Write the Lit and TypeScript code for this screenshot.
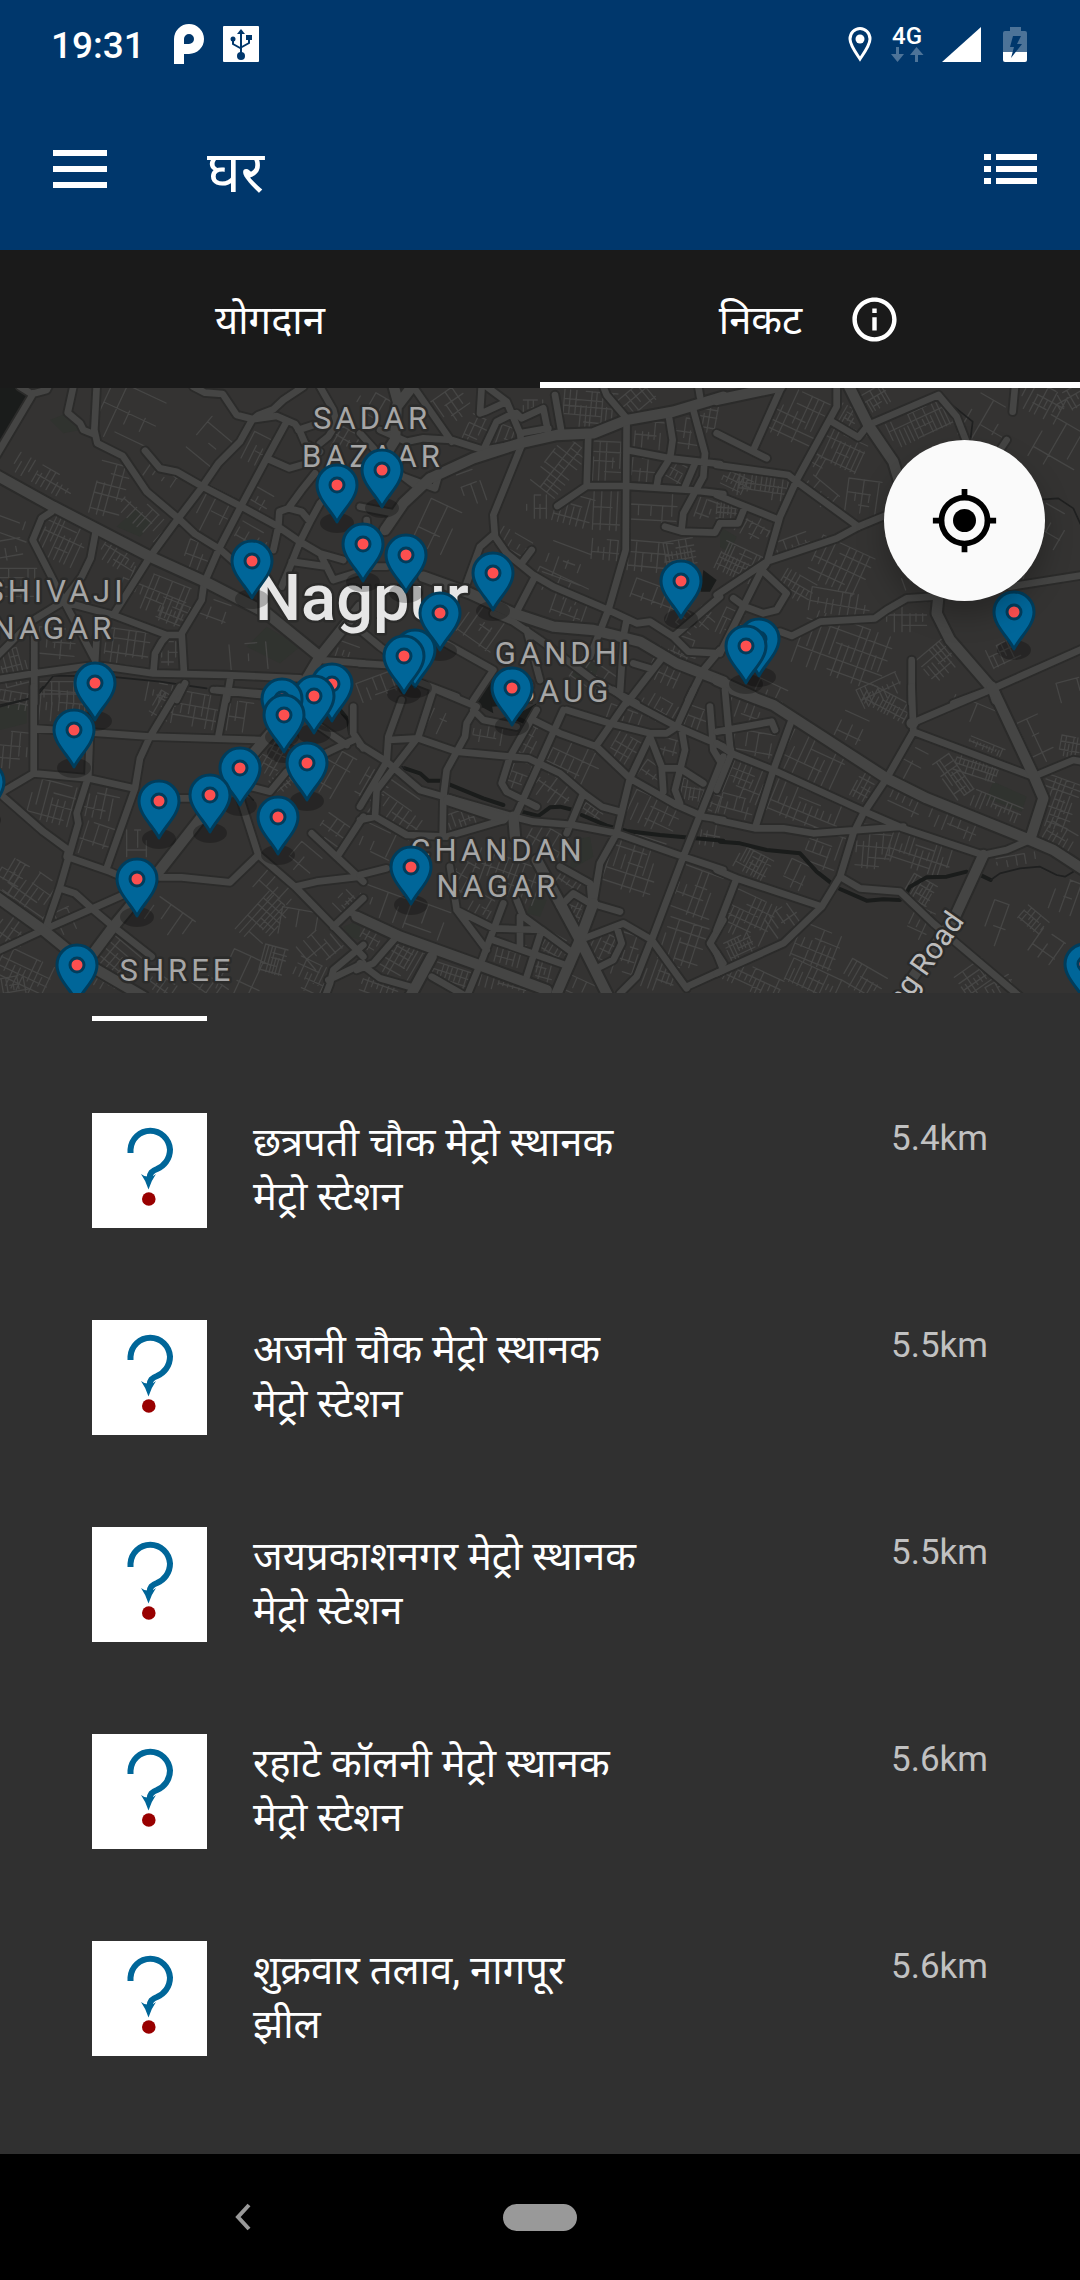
import { LitElement, html, svg, css } from "lit";
import { customElement, property } from "lit/decorators.js";

/** A street patch: centre x, centre y, width, height, rotation, spacing. */
type Patch = [number, number, number, number, number, number];

interface Tile {
  x: number;
  y: number;
  main: string;
  roads: string;
  river: string;
  track: string;
  water: string;
  park: string;
  patches: Patch[];
}

const TILES: Tile[] = [
  {
    x: 0,
    y: -8,
    main: "M-30 275L160 380L450 530L615 605L800 700L960 830M1080 680L960 830L900 930",
    roads:
      "M100 40L-10 225M60 20L95 42L140 30L150 10M220 20L203 98L240 130L250 150L280 162M290 20L283 150L292 190L368 228L440 335L535 415L585 462L660 508L730 570M580 20L615 38L668 42L710 105L760 118L830 108L885 132L900 155L915 190L960 215M910 20L850 60L820 88L775 105L755 122L720 185L655 250L600 330L535 415L450 530L340 705M860 125L800 235L725 375L660 500L612 610L605 660L545 760L552 880M435 212L480 265L530 275L605 318L725 380L835 440L900 485L960 520L1030 540M800 235L868 265L920 250M960 20L1000 90L1010 130L985 170L960 190M895 150L940 135M945 280L905 330L865 385L838 395L835 440L820 510M865 385L905 395L930 425M1000 330L960 370L930 425L900 485L870 560L845 620M875 545L980 560M965 530L1000 600L1080 575M160 380L155 395L125 415L98 480L190 660L285 840M288 450L272 535L245 590L185 668L100 720L-10 830M190 665L340 705L500 765L545 765M460 880L465 820L485 785L500 768M-20 900L105 880L285 855L460 880L680 885L900 895M103 760V970M640 930L780 945M690 900L680 960M555 910L530 960M960 840L1090 850M290 770L285 855",
    river: "",
    track: "M118 940L160 887L330 890L480 905L620 925M0 980L90 955",
    water: "M0 24H50L85 48L0 200Z",
    park: "M350 440L410 385L455 430L420 470ZM740 800L800 740L900 800L840 850ZM150 120L200 100L240 150L190 160Z",
    patches: [
      [385, 110, 170, 170, 25, 52], [640, 190, 120, 110, -50, 60], [130, 290, 190, 60, 30, 20], [330, 330, 90, 160, 15, 28],
      [430, 410, 160, 70, 42, 24], [190, 480, 130, 130, 25, 20], [360, 530, 120, 70, 32, 19], [50, 610, 120, 90, 0, 22],
      [460, 640, 200, 110, 22, 24], [520, 700, 90, 70, 22, 14], [640, 400, 90, 140, 27, 44], [775, 210, 70, 90, 27, 30],
      [780, 360, 60, 60, 30, 26], [600, 530, 90, 80, 20, 32], [45, 860, 80, 110, -15, 18], [170, 790, 110, 90, 5, 26],
      [380, 810, 130, 120, 8, 26], [510, 820, 50, 70, 0, 20], [200, 940, 170, 70, 0, 24], [480, 940, 80, 60, 12, 20],
      [40, 430, 80, 110, -70, 55], [1030, 180, 80, 70, 30, 22], [640, 690, 90, 60, 20, 44], [750, 830, 120, 80, -5, 66],
      [1040, 820, 60, 60, 20, 24], [480, 290, 90, 50, 35, 30], [20, 510, 90, 60, -10, 38], [760, 470, 100, 50, 30, 36],
    ],
  },
  {
    x: 360,
    y: -8,
    main: "M1090 50L940 95L800 120L700 160L590 165L480 190L340 235L210 295L130 370L75 450M160 15L110 80L105 180L60 250M190 590L330 640L460 700L580 740L700 750L840 785L950 850L1090 905M100 15L115 70",
    roads:
      "M160 20L275 185M60 150L140 185L190 175L275 180L370 210L480 190M210 290L235 290L225 325L130 290M365 20L360 100L375 95L440 65M380 20L440 65L480 160L485 195L400 405L405 470L440 520L520 585L580 620L745 690L830 730L870 725L940 770L985 815L1080 820M370 210L410 125L460 100M470 100L485 115L550 85L565 160M480 160L565 145M585 45L605 160M730 20L740 45L800 115L797 510L745 690L690 830M1015 20L1020 50M685 165L680 318L592 378M680 318L800 318L990 330L1090 342M925 100L938 180L930 235L895 290L890 320M1000 90L1035 220L1030 290L970 400L965 445M800 210L930 235L1080 252M1005 250L975 320M915 440L965 455L1065 458L1080 430M515 510L485 550M400 465L360 500L320 610M525 590L465 705M400 700L460 725L540 780L700 900L830 970M800 720L790 770M790 780L780 940M940 770L1080 650M905 835L800 970M1080 810L1030 870L985 960M0 750L60 800L130 850M0 850L80 855M240 780L400 870L340 960M820 850L870 865M160 900L290 950M20 420L30 560L80 560M0 160L90 260L170 320M0 380L100 400M500 750L540 900",
    river: "",
    track: "",
    water: "M1030 570L1070 600L1050 635L1022 635ZM390 900L520 970L340 985Z",
    park: "M640 840L720 850L700 900L640 890Z",
    patches: [
      [270, 80, 110, 90, -35, 26], [690, 90, 160, 110, 5, 17], [830, 60, 100, 70, -40, 22], [600, 260, 170, 90, -52, 20],
      [745, 245, 90, 120, 3, 22], [870, 165, 90, 80, 5, 24], [980, 160, 70, 90, 8, 26], [850, 275, 70, 80, 5, 24],
      [950, 285, 70, 70, 30, 18], [640, 390, 110, 90, 15, 22], [740, 390, 80, 120, 3, 28], [880, 390, 140, 110, 3, 36],
      [530, 380, 60, 70, 0, 22], [340, 320, 70, 100, -20, 34], [460, 490, 100, 60, 30, 28], [620, 550, 120, 100, 20, 36],
      [750, 510, 110, 60, 5, 24], [870, 530, 130, 90, 5, 26], [960, 520, 90, 80, -10, 14], [880, 660, 140, 90, 20, 32],
      [600, 620, 160, 60, 25, 40], [370, 740, 120, 110, 35, 34], [1010, 720, 90, 90, -50, 26], [1040, 110, 60, 90, 10, 20],
      [640, 690, 130, 60, 20, 30], [230, 440, 100, 140, 25, 52], [40, 80, 100, 80, 30, 50], [50, 920, 110, 60, -20, 30],
      [440, 170, 50, 60, 20, 22], [350, 150, 60, 80, 25, 22], [920, 860, 90, 100, 25, 26], [980, 800, 70, 50, 20, 18],
      [1040, 390, 60, 60, 20, 28], [700, 890, 120, 80, 35, 24], [520, 80, 60, 40, 0, 18],
    ],
  },
  {
    x: 720,
    y: -8,
    main: "M-10 60L180 20M385 15L445 135L520 245L545 330M655 650L650 700L690 780L820 930L830 960M-10 900L100 950",
    roads:
      "M185 20L100 210M-10 160L140 235M350 20L350 80L230 300L180 410L140 550L125 570L0 820M335 125L415 172L445 135L655 45L710 110L745 200M885 20L878 95M860 180L820 240M-10 255L205 285L230 305L415 440M-10 345L165 415M75 380L55 430L0 430M500 405L415 440L350 475L140 545L-10 645M125 570L200 640L170 690L130 700L75 680L40 655M180 755L215 768L300 725L465 715L500 690L560 655L640 650M870 620L1090 585M1090 805L820 925L700 970M575 840V970",
    river: "",
    track: "M690 70L758 125L750 190M970 358L1015 355L1060 385L1085 440",
    water: "",
    park: "M0 440L50 470L30 520L0 500Z",
    patches: [
      [230, 110, 150, 150, 25, 22], [380, 110, 60, 60, 30, 14], [370, 200, 130, 120, 25, 18], [460, 60, 90, 60, -30, 14],
      [600, 130, 190, 80, -25, 16], [130, 320, 150, 70, 8, 16], [50, 310, 90, 50, 25, 14], [20, 395, 60, 50, 5, 12],
      [110, 440, 110, 80, 28, 20], [300, 340, 100, 60, 40, 26], [430, 350, 100, 100, 8, 28], [60, 550, 130, 90, 25, 13],
      [220, 500, 100, 60, -20, 26], [360, 560, 170, 130, 25, 24], [230, 620, 100, 70, 30, 16], [360, 670, 180, 70, 10, 26],
      [560, 710, 120, 90, 0, 22], [370, 810, 270, 170, 20, 25], [480, 930, 130, 60, -25, 18], [660, 840, 110, 90, -40, 18],
      [850, 820, 90, 60, -25, 20], [960, 60, 150, 90, 28, 20], [800, 130, 120, 140, 30, 46], [1020, 200, 140, 140, 30, 66],
      [990, 440, 90, 110, 30, 44], [580, 590, 70, 60, -20, 26], [900, 560, 60, 70, 15, 26], [30, 730, 60, 80, 25, 18],
      [280, 250, 60, 60, 30, 20], [1050, 60, 80, 60, -30, 18], [150, 940, 90, 60, 25, 34], [1050, 930, 70, 60, -15, 60],
    ],
  },
  {
    x: 0,
    y: 302,
    main: "M-10 620L130 720L240 810L430 920M820 120L700 260L480 540L340 710L280 790",
    roads:
      "M101 -10V250M101 115L450 140L780 150M540 -10L450 140L420 205L405 295L318 540M650 0L840 15M680 10L655 140M270 130L265 260L230 370L235 400L180 590L135 720M0 310L101 250L265 265L400 295M10 320L130 425L205 480L200 500L330 545L400 575M-10 785L130 720L290 650L380 610M180 595L225 610L275 655L340 710L455 800M480 562L545 562L690 577L775 495M530 325H600M700 260L775 495L885 590L1090 800M750 290L810 305L860 245L1060 150M935 430L1090 575M885 590L950 575L1080 560M1090 380L1015 495M1000 710L1090 625M1050 665L1090 690M975 920L990 880L1000 840L1090 765M985 870L1090 820M1060 50V130L1090 175M960 110L1040 165",
    river: "M1020 60L1045 90L1050 130",
    track: "M0 45L95 25L130 -10M740 310L760 330",
    water: "",
    park: "M1030 710L1080 690V750L1050 740ZM0 50L80 40V100L0 120Z",
    patches: [
      [40, 30, 90, 50, 10, 18], [40, 180, 100, 110, 5, 24], [190, 50, 140, 90, 5, 22], [590, 60, 140, 100, 10, 24],
      [720, 80, 70, 90, 8, 26], [170, 340, 160, 120, 15, 22], [300, 330, 110, 110, 12, 26], [280, 450, 130, 100, 18, 34],
      [490, 50, 60, 80, 30, 18], [100, 600, 150, 110, 35, 22], [30, 560, 70, 110, 30, 24], [40, 720, 90, 80, 35, 26],
      [200, 690, 110, 70, -25, 26], [70, 850, 160, 110, 25, 22], [350, 800, 120, 90, 40, 20], [300, 860, 120, 60, 30, 20],
      [790, 690, 90, 150, 42, 18], [830, 600, 120, 80, 42, 34], [930, 860, 100, 90, 25, 18], [810, 200, 80, 100, 30, 18],
      [850, 270, 70, 50, -40, 14], [1000, 250, 80, 140, 30, 38], [1000, 420, 80, 70, 35, 28], [960, 770, 110, 90, -40, 28],
      [820, 810, 70, 80, 15, 12], [510, 690, 130, 80, 35, 50], [730, 860, 120, 130, 25, 56], [900, 700, 120, 80, 10, 60],
      [910, 510, 80, 80, 40, 44], [410, 460, 60, 80, 0, 36], [1040, 640, 60, 60, -45, 16], [490, 890, 120, 50, 35, 22],
      [40, 890, 100, 60, -10, 18], [630, 890, 100, 50, 35, 28],
    ],
  },
  {
    x: 360,
    y: 302,
    main: "M460 380L465 440M530 510L660 750L745 920M-10 680L120 740L370 830L560 900M700 640L655 760L590 910M215 800L150 920M265 330L430 385",
    roads:
      "M0 165L80 215L180 300L250 320L460 380L520 395L640 405L770 430L970 500L1090 540M125 30L85 140L80 215L0 350M85 150L175 145L290 185L505 205L600 250L670 310L725 350L780 365M220 0L175 140L50 300L45 380L0 390M45 380L140 435L260 440M230 0L350 50L320 100L315 140L260 240L250 320L248 440M340 60L370 90L470 110M610 60L540 215L470 370M530 60L450 200L425 280L440 305L530 350M520 90L600 130L710 170L810 265L950 345L1030 380L1090 390M620 60L750 100L870 130L920 130L950 110M760 0L800 30L950 110L1090 170M800 35L710 165M1000 0L950 110M870 140L810 265L770 430L720 520L700 640M870 140L905 230L910 305M905 235L960 235L1030 280M965 120L975 180L945 300L960 340M1090 200L970 500L875 750M670 310L620 430M600 530L690 580L695 640L780 665M600 650L640 610L690 640M660 750L790 700L875 750L980 895M770 710L785 760L760 810L720 830M870 760L830 860L780 910M270 530L290 660L380 780M290 660L400 715L545 720L640 790M470 630L490 680L640 790M430 640L370 800L320 920M480 680V770M400 750L630 830M545 720L500 860M110 740L40 820L-10 840M0 820L60 865L150 890M0 555L80 535M260 440L430 390M980 890L1090 840M1090 690L1050 760L1090 820M1050 50L1060 180L1090 230M215 860L320 920",
    river: "M135 235L180 250L205 272L240 272L370 325L430 345M485 365L535 378L570 352L600 350L640 360M665 375L740 407L800 423L900 435L1090 452",
    track: "M90 210L135 235",
    water: "M385 -10L400 70L345 40ZM495 60L530 40L500 105L450 85Z",
    park: "M640 450L690 440L700 500L630 540ZM520 620L560 630L540 680L500 670Z",
    patches: [
      [250, 80, 70, 110, 25, 44], [390, 130, 100, 60, 10, 26], [500, 150, 60, 90, 28, 20], [480, 260, 60, 90, 20, 22],
      [640, 220, 150, 120, 25, 30], [580, 300, 110, 80, 35, 22], [800, 90, 120, 60, 20, 28], [800, 180, 90, 80, 30, 20],
      [870, 250, 60, 60, 35, 22], [900, 60, 120, 70, 30, 22], [1000, 90, 90, 80, 20, 24], [920, 180, 60, 70, 15, 28],
      [1000, 300, 70, 60, 10, 16], [880, 370, 150, 90, 25, 26], [820, 520, 150, 170, 18, 26], [1010, 610, 120, 140, 20, 30],
      [970, 760, 120, 130, 18, 28], [120, 360, 150, 120, 35, 26], [40, 290, 80, 90, 30, 18], [310, 390, 90, 60, -20, 18],
      [440, 560, 200, 110, 20, 24], [560, 450, 110, 70, 30, 30], [630, 580, 80, 60, 35, 20], [650, 660, 60, 60, 25, 16],
      [370, 660, 80, 80, 30, 22], [450, 790, 80, 70, 15, 18], [540, 840, 80, 60, 15, 16], [590, 770, 80, 60, 30, 18],
      [120, 810, 120, 110, 30, 16], [270, 860, 110, 60, 18, 16], [430, 880, 140, 50, 15, 20], [40, 750, 80, 70, 30, 20],
      [730, 770, 70, 80, 25, 20], [810, 800, 80, 130, 18, 22], [900, 860, 90, 90, 20, 20], [700, 360, 60, 50, 35, 16],
      [50, 470, 100, 110, 25, 50], [60, 640, 130, 80, 20, 46], [1040, 430, 80, 70, 10, 22], [60, 890, 110, 60, 20, 18],
      [650, 890, 100, 50, 25, 40], [200, 690, 120, 90, 20, 56], [1050, 340, 60, 60, 20, 20], [310, 560, 60, 90, 30, 24],
    ],
  },
  {
    x: 720,
    y: 302,
    main: "M40 0L160 45L500 265L620 325L930 450L1000 480L1100 545M575 100L580 98M815 -10L940 255L970 325L930 450M790 495L705 680L580 860",
    roads:
      "M15 0L30 170L35 190M-10 125L155 95L165 120M-10 160L35 190L160 240L435 365L550 415L790 495L860 480L930 450M215 90L160 240L105 415M-10 390L105 415L190 415L280 430L550 410M575 -10L580 125L500 265L430 370L400 430L360 560L305 650L190 760L-10 850M575 100L820 -5M580 125L940 260L1060 210L1090 215M-10 540L50 565L305 650M50 565L-10 720M-10 790L10 840M360 560L420 595L540 605L640 700L900 920M35 190L-10 300",
    river: "M0 455L60 460L140 480L240 490L290 545L335 580M360 597L440 632L490 628L540 630M562 605L570 590L620 562L680 560L740 545M785 557L812 570",
    track: "M812 570L840 550L900 535L960 530L1010 555L1035 560L1060 545",
    water: "",
    park: "M820 275L920 320L905 365L800 325Z",
    patches: [
      [80, 60, 110, 60, 20, 24], [100, 160, 120, 70, 10, 40], [70, 270, 130, 110, 22, 20], [50, 350, 100, 60, 15, 22],
      [280, 210, 180, 120, 25, 28], [250, 350, 230, 100, 22, 22], [410, 120, 110, 80, 25, 40], [500, 40, 140, 60, 28, 14],
      [430, 290, 50, 80, 28, 16], [560, 330, 100, 80, 25, 22], [700, 400, 150, 60, 22, 26], [460, 470, 100, 130, 5, 22],
      [600, 490, 190, 100, 18, 18], [310, 480, 100, 110, 20, 22], [100, 520, 100, 70, 28, 14], [240, 560, 90, 80, 25, 34],
      [80, 680, 150, 130, 25, 18], [190, 690, 90, 70, -35, 22], [60, 770, 80, 60, -25, 12], [100, 870, 170, 70, 25, 18],
      [290, 770, 130, 110, 22, 22], [280, 870, 160, 70, 25, 18], [430, 870, 120, 80, 30, 20], [700, 260, 60, 130, -35, 14],
      [770, 230, 130, 60, 18, 12], [830, 350, 150, 50, 22, 16], [800, 170, 110, 24, 22, 12], [1010, 340, 110, 150, 20, 16],
      [1020, 440, 90, 60, 30, 18], [750, 80, 130, 90, 22, 66], [600, 600, 80, 70, 30, 14], [940, 690, 80, 50, 40, 14],
      [830, 700, 60, 130, 20, 44], [1040, 620, 80, 100, 20, 46], [770, 870, 100, 90, -35, 18], [840, 890, 80, 40, -30, 16],
      [570, 220, 70, 100, 28, 40], [950, 150, 70, 140, -25, 40], [1050, 170, 60, 60, 10, 16], [600, 700, 60, 90, 25, 24],
      [890, 510, 120, 30, -10, 28], [980, 770, 80, 80, 35, 44],
    ],
  },
];

/** Pin anchors, measured at the centre of the dot. */
const PINS: [number, number][] = [
  [382, 82], [337, 97], [363, 156], [406, 167], [252, 173], [493, 185], [681, 193], [440, 225],
  [1014, 224], [759, 251], [746, 258], [415, 262], [404, 268], [95, 295], [332, 296], [512, 300],
  [314, 308], [282, 311], [284, 327], [74, 342], [307, 375], [240, 380], [-16, 394], [210, 407],
  [159, 413], [278, 429], [411, 479], [137, 491], [1085, 576], [77, 577],
];

const LABELS: [string, number, number][] = [
  ["SADAR", 372, 41], ["BAZAAR", 373, 79], ["SHIVAJI", 56, 214], ["NAGAR", 54, 251],
  ["GANDHI", 564, 276], ["BAUG", 564, 314], ["CHANDAN", 498, 473], ["NAGAR", 498, 509], ["SHREE", 177, 593],
];

const PLACES = [
  { name: "छत्रपती चौक मेट्रो स्थानक", kind: "मेट्रो स्टेशन", distance: "5.4km" },
  { name: "अजनी चौक मेट्रो स्थानक", kind: "मेट्रो स्टेशन", distance: "5.5km" },
  { name: "जयप्रकाशनगर मेट्रो स्थानक", kind: "मेट्रो स्टेशन", distance: "5.5km" },
  { name: "रहाटे कॉलनी मेट्रो स्थानक", kind: "मेट्रो स्टेशन", distance: "5.6km" },
  { name: "शुक्रवार तलाव, नागपूर", kind: "झील", distance: "5.6km" },
];

/** Fills a patch with an irregular grid of street segments. */
function streets([cx, cy, w, h, angle, gap]: Patch): string {
  let seed = Math.round(cx * 7 + cy * 13 + w);
  const rnd = () => {
    seed = (seed * 1103515245 + 12345) % 2147483648;
    return seed / 2147483648;
  };
  const a = (angle * Math.PI) / 180;
  const at = (x: number, y: number) =>
    `${Math.round(cx + x * Math.cos(a) - y * Math.sin(a))} ${Math.round(cy + x * Math.sin(a) + y * Math.cos(a))}`;
  let d = "";
  for (let x = -w / 2; x <= w / 2; x += gap * (0.7 + rnd() * 0.4)) {
    const top = -h / 2 + h * 0.4 * Math.floor(rnd() * 1.8);
    const end = h / 2 - h * 0.35 * Math.floor(rnd() * 1.6);
    if (end > top) d += `M${at(x, top)}L${at(x, end)}`;
  }
  for (let y = -h / 2; y <= h / 2; y += gap * (1.1 + rnd() * 0.8)) {
    const from = -w / 2 + w * 0.4 * Math.floor(rnd() * 1.6);
    d += `M${at(from, y)}L${at(w / 2 - w * 0.3 * Math.floor(rnd() * 1.5), y)}`;
  }
  return d;
}

@customElement("city-map")
export class CityMap extends LitElement {
  static styles = css`
    :host { display: block; background: #343332; }
    svg { display: block; width: 100%; height: 100%; }
    path { fill: none; stroke-linecap: round; stroke-linejoin: round; }
    .park { fill: #30332f; }
    .water { fill: #1a1c1b; }
    .street { stroke: #464645; stroke-width: 4; }
    .casing { stroke: #2b2b2a; stroke-width: 31; }
    .casing.wide { stroke-width: 43; }
    .road { stroke: #454544; stroke-width: 20; }
    .road.wide { stroke-width: 31; }
    .river { stroke: #1a1c1b; stroke-width: 12; }
    .track { stroke: #1f2020; stroke-width: 5; }
    .pin-body { fill: #006699; stroke: #003d5c; stroke-width: 3; }
    .pin-dot { fill: #fc4f4f; stroke: #003d5c; stroke-width: 3; }
    .pin-shade { fill: #000; opacity: 0.26; }
    text {
      font-family: Roboto, "Liberation Sans", sans-serif;
      paint-order: stroke;
      stroke: #2b2b2a;
      stroke-width: 5;
      stroke-linejoin: round;
    }
    .area { font-size: 31px; letter-spacing: 4px; fill: #a6a6a6; text-anchor: middle; }
    .city { font-size: 65px; font-weight: 500; fill: #e6e6e6; }
    .street-name { font-size: 30px; fill: #bdbdbd; text-anchor: end; }
  `;

  private layer(draw: (t: Tile) => unknown) {
    return TILES.map((t) => svg`<g transform="translate(${t.x} ${t.y}) scale(0.33333)">${draw(t)}</g>`);
  }

  render() {
    return html`<svg viewBox="0 0 1080 605" preserveAspectRatio="xMidYMid slice" role="img" aria-label="Nagpur">
      ${this.layer((t) => svg`<path class="park" d=${t.park}></path><path class="water" d=${t.water}></path>
        <path class="street" d=${t.patches.map(streets).join("")}></path>`)}
      ${this.layer((t) => svg`<path class="river" d=${t.river}></path><path class="track" d=${t.track}></path>`)}
      ${this.layer((t) => svg`<path class="casing" d=${t.roads}></path><path class="casing wide" d=${t.main}></path>`)}
      ${this.layer((t) => svg`<path class="road" d=${t.roads}></path><path class="road wide" d=${t.main}></path>`)}
      ${LABELS.map(([name, x, y]) => svg`<text class="area" x=${x} y=${y}>${name}</text>`)}
      <text class="city" x="255" y="232">Nagpur</text>
      <text class="street-name" transform="translate(965 533) rotate(-55)">ng Road</text>
      ${PINS.map(([x, y]) => svg`<g transform="translate(${x} ${y})">
        <ellipse class="pin-shade" cx="0" cy="38" rx="17" ry="10"></ellipse>
        <path class="pin-body" d="M0 37C-5 26-20 14-20 0A20 20 0 1 1 20 0C20 14 5 26 0 37Z"></path>
        <circle class="pin-dot" r="7"></circle>
      </g>`)}
    </svg>`;
  }
}

@customElement("place-row")
export class PlaceRow extends LitElement {
  @property() name = "";
  @property() kind = "";
  @property() distance = "";

  static styles = css`
    :host { display: flex; align-items: flex-start; gap: 46px; }
    .thumb { flex: none; width: 115px; height: 115px; background: #fff; }
    .words { flex: 1; padding-top: 3px; font-size: 40px; line-height: 54px; color: #fff; }
    .words p { margin: 0; }
    .distance { font-size: 35px; line-height: 52px; color: #c1c1c1; }
  `;

  render() {
    return html`
      <svg class="thumb" viewBox="0 0 115 115" aria-hidden="true">
        <path d="M38.5 40V36.500A19.800 20.200 0 0 1 78 36.500C78 46 72 53 65 56C60 58 57.500 60 57.500 66" fill="none" stroke="#006699" stroke-width="6"></path>
        <path d="M49 61Q53 64 56.500 63.500Q61 64 64 61Q59 68 56.500 76.500Q54 68 49 61Z" fill="#006699"></path>
        <circle cx="56.800" cy="86" r="6.800" fill="#990000"></circle>
      </svg>
      <div class="words"><p>${this.name}</p><p>${this.kind}</p></div>
      <span class="distance">${this.distance}</span>
    `;
  }
}

@customElement("app-root")
export class AppRoot extends LitElement {
  static styles = css`
    :host {
      display: flex;
      flex-direction: column;
      min-height: 100vh;
      background: #303030;
      color: #fff;
      font-family: Roboto, "Noto Sans Devanagari", "Noto Sans", sans-serif;
    }
    button { border: 0; margin: 0; padding: 0; background: none; color: inherit; font: inherit; }
    svg { display: block; }
    .top { background: #00376c; }
    .status { display: flex; align-items: center; height: 88px; padding: 0 53px 0 51px; }
    .clock { font-size: 37px; font-weight: 500; line-height: 40px; margin-right: 29px; padding-top: 4px; }
    .signals { display: flex; align-items: center; gap: 18px; margin-left: auto; }
    .strength { margin-right: 4px; }
    .tray { display: flex; align-items: center; gap: 19px; }
    .cell { display: flex; flex-direction: column; align-items: center; gap: 2px; width: 34px; font-size: 24px; font-weight: 500; line-height: 18px; }
    .toolbar { display: flex; align-items: center; height: 162px; padding: 0 43px 0 53px; }
    h1 { flex: 1; margin: 0 0 0 100px; padding-top: 8px; font-size: 57px; font-weight: 400; line-height: 80px; }
    .tabs { display: grid; grid-template-columns: 1fr 1fr; background: #1a1a1a; }
    .tab {
      display: flex;
      align-items: center;
      justify-content: center;
      gap: 46px;
      height: 138px;
      padding-top: 6px;
      font-size: 40px;
      line-height: 54px;
      border-bottom: 6px solid transparent;
    }
    .tab span { padding-top: 4px; }
    .tab.active { border-color: #fff; }
    .map { position: relative; }
    city-map { height: 605px; }
    .locate {
      position: absolute;
      top: 52px;
      right: 35px;
      display: grid;
      place-items: center;
      width: 161px;
      height: 161px;
      border-radius: 50%;
      background: #fafafa;
      color: #000;
      box-shadow: 0 14px 28px rgba(0, 0, 0, 0.25);
    }
    .places { flex: 1; display: flex; flex-direction: column; gap: 92px; list-style: none; margin: 0; padding: 23px 92px 98px; }
    .peek { width: 115px; height: 5px; background: #fff; }
    .nav { display: grid; grid-template-columns: 45fr 10fr 45fr; place-items: center; height: 126px; background: #000; }
    .home { width: 74px; height: 27px; border-radius: 14px; background: #999; }
  `;

  render() {
    return html`
      <header class="top">
        <div class="status">
          <span class="clock">19:31</span>
          <div class="tray">
            <svg width="30" height="40" viewBox="0 0 30 40" fill="#fff"><path fill-rule="evenodd" d="M0 40V15A15 15 0 1 1 15 30H10V40ZM10 20V15A5 5 0 1 1 15 20Z"></path></svg>
            <svg width="36" height="36" viewBox="0 0 36 36">
              <rect width="36" height="36" rx="1" fill="#fff"></rect>
              <g fill="none" stroke="#00376c" stroke-width="2">
                <path d="M18 6V31M10 14V18L18 22.500M26 12V17L18 21.500"></path>
              </g>
              <g fill="#00376c"><path d="M18 3L22 8H14Z"></path><circle cx="18" cy="30" r="4"></circle><circle cx="10" cy="13" r="2.500"></circle><path d="M23 9H29V14H23Z"></path></g>
            </svg>
          </div>
          <div class="signals">
            <svg width="24" height="35" viewBox="0 0 24 35"><path d="M12 32C8 26 2 18 2 12A10 10.500 0 0 1 22 12C22 18 16 26 12 32Z" fill="none" stroke="#fff" stroke-width="3"></path><circle cx="12" cy="12" r="4.500" fill="#fff"></circle></svg>
            <div class="cell">
              <span>4G</span>
              <svg width="34" height="15" viewBox="0 0 34 15" fill="#4d7398"><path d="M6 0H9V7H14L7.500 15L1 7H6ZM25 15H28V8H33.500L26.500 0L20 8H25Z"></path></svg>
            </div>
            <svg class="strength" width="39" height="35" viewBox="0 0 39 35"><path d="M0 35L39 0V35Z" fill="#fff"></path></svg>
            <svg width="24" height="35" viewBox="0 0 24 35"><path d="M0 25V6Q0 4 2 4H7V0H18V4H22Q24 4 24 6V25Z" fill="#4d7398"></path><path d="M0 25H24V33Q24 35 22 35H2Q0 35 0 33Z" fill="#fff"></path><path d="M10 9H18L14 17H19L8 31L11 20H7Z" fill="#00376c"></path></svg>
          </div>
        </div>
        <div class="toolbar">
          <button aria-label="मेनू"><svg width="54" height="38" viewBox="0 0 54 38" fill="#fff"><path d="M0 0H54V6H0ZM0 16H54V22H0ZM0 32H54V38H0Z"></path></svg></button>
          <h1>घर</h1>
          <button aria-label="सूची"><svg width="53" height="30" viewBox="0 0 53 30" fill="#fff"><path d="M0 0H7V6H0ZM12 0H53V6H12ZM0 12H7V18H0ZM12 12H53V18H12ZM0 24H7V30H0ZM12 24H53V30H12Z"></path></svg></button>
        </div>
      </header>
      <div class="tabs" role="tablist">
        <button class="tab" role="tab" aria-selected="false"><span>योगदान</span></button>
        <button class="tab active" role="tab" aria-selected="true">
          <span>निकट</span>
          <svg width="53" height="53" viewBox="0 0 24 24" fill="#fff"><path d="M11 17h2v-6h-2v6zm1-15C6.480 2 2 6.480 2 12s4.480 10 10 10 10-4.480 10-10S17.520 2 12 2zm0 18c-4.410 0-8-3.590-8-8s3.590-8 8-8 8 3.590 8 8-3.590 8-8 8zM11 9h2V7h-2v2z"></path></svg>
        </button>
      </div>
      <section class="map">
        <city-map></city-map>
        <button class="locate" aria-label="स्थान">
          <svg width="69" height="69" viewBox="0 0 24 24"><circle cx="12" cy="12" r="4" fill="#000"></circle><circle cx="12" cy="12" r="8" fill="none" stroke="#000" stroke-width="2"></circle><path d="M12 1V4M12 20V23M1 12H4M20 12H23" stroke="#000" stroke-width="2"></path></svg>
        </button>
      </section>
      <ul class="places">
        <li class="peek" aria-hidden="true"></li>
        ${PLACES.map((p) => html`<li><place-row .name=${p.name} .kind=${p.kind} .distance=${p.distance}></place-row></li>`)}
      </ul>
      <nav class="nav">
        <button aria-label="मागे"><svg width="16" height="28" viewBox="0 0 16 28"><path d="M14 2L3 14L14 26" fill="none" stroke="#999" stroke-width="4"></path></svg></button>
        <button class="home" aria-label="होम"></button>
      </nav>
    `;
  }
}
